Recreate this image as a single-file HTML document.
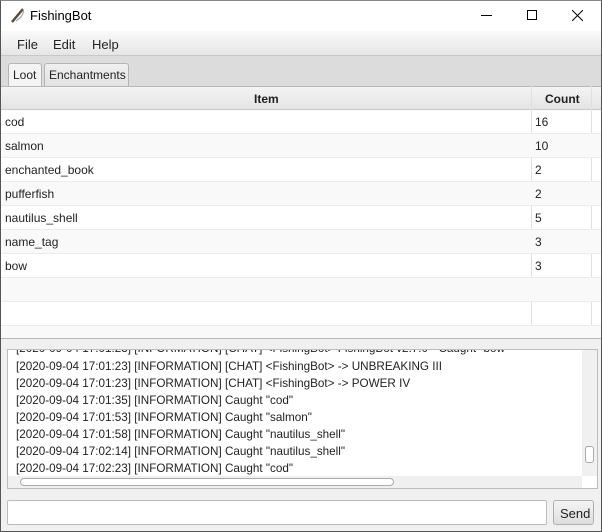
<!DOCTYPE html><html><head><style>
*{box-sizing:border-box;margin:0;padding:0}
body{width:602px;height:532px;overflow:hidden;font-family:"Liberation Sans",sans-serif;font-size:12px;color:#222;background:#f0f0f0;position:relative}
.a{position:absolute}
.win{left:0;top:0;width:602px;height:532px;border:1px solid #555;border-top:1px solid #888}
.title{left:1px;top:0;width:600px;height:31px;background:#fff}
.menu{left:1px;top:31px;width:600px;height:25px;background:linear-gradient(#fafafa,#e6e6e6);border-bottom:1px solid #c8c8c8}
.menu span{position:absolute;top:6px;font-size:13px;color:#222}
.tabs{left:1px;top:56px;width:600px;height:30px;background:#dcdcdc}
.tab{top:63px;height:23px;border:1px solid #b5b5b5;border-bottom:none;border-radius:3px 3px 0 0;font-size:12px;padding:4px 0 0 4px;background:linear-gradient(#f0f0f0,#e2e2e2);white-space:nowrap}
.hdr{left:1px;top:86px;width:600px;height:24px;background:linear-gradient(#f4f4f4,#e4e4e4);border-top:1px solid #b8b8b8;border-bottom:1px solid #c8c8c8;font-weight:bold;font-size:12px}
.row{left:1px;width:600px;height:24px;border-bottom:1px solid #ececec;font-size:12px}
.row span{position:absolute;top:5px}
.log{left:7px;top:349px;width:591px;height:140px;background:#fff;border:1px solid #bdbdbd;overflow:hidden}
.log div{position:absolute;left:8px;font-size:11.7px;white-space:nowrap;color:#222}
</style></head><body>
<div class="a title"></div>
<svg class="a" style="left:10px;top:7px" width="16" height="16" viewBox="0 0 16 16"><path d="M2 15 L13 2" stroke="#5a4a3a" stroke-width="2.5"/><path d="M13 2 Q15 8 6 14" stroke="#999" fill="none" stroke-width="1"/></svg>
<div class="a" style="left:30px;top:8px;font-size:13px;color:#000">FishingBot</div>
<div class="a" style="left:481px;top:15px;width:11px;height:1px;background:#000"></div>
<div class="a" style="left:527px;top:10px;width:10px;height:10px;border:1px solid #000"></div>
<svg class="a" style="left:572px;top:10px" width="11" height="11"><path d="M0 0L11 11M11 0L0 11" stroke="#000" stroke-width="1"/></svg>
<div class="a menu"><span style="left:16px">File</span><span style="left:52px">Edit</span><span style="left:91px">Help</span></div>
<div class="a tabs"></div>
<div class="a tab" style="left:8px;width:34px;background:#f4f4f4;height:24px">Loot</div>
<div class="a tab" style="left:44px;width:85px">Enchantments</div>
<div class="a" style="left:1px;top:86px;width:600px;height:253px;background:#fff"></div>
<div class="a hdr"><span class="a" style="left:253px;top:5px">Item</span><span class="a" style="left:544px;top:5px">Count</span></div>
<div class="a" style="left:531px;top:86px;width:1px;height:252px;background:#e0e0e0"></div>
<div class="a" style="left:591px;top:86px;width:1px;height:252px;background:#e0e0e0"></div>
<div class="a row" style="top:110px"><span style="left:4px">cod</span><span style="left:534px">16</span></div>
<div class="a row" style="top:134px;background:#f9f9f9"><span style="left:4px">salmon</span><span style="left:534px">10</span></div>
<div class="a row" style="top:158px"><span style="left:4px">enchanted_book</span><span style="left:534px">2</span></div>
<div class="a row" style="top:182px;background:#f9f9f9"><span style="left:4px">pufferfish</span><span style="left:534px">2</span></div>
<div class="a row" style="top:206px"><span style="left:4px">nautilus_shell</span><span style="left:534px">5</span></div>
<div class="a row" style="top:230px;background:#f9f9f9"><span style="left:4px">name_tag</span><span style="left:534px">3</span></div>
<div class="a row" style="top:254px"><span style="left:4px">bow</span><span style="left:534px">3</span></div>
<div class="a row" style="top:278px;background:#f9f9f9"></div>
<div class="a row" style="top:302px"></div>
<div class="a row" style="top:326px;height:12px;background:#f9f9f9;border:none"></div>
<div class="a" style="left:1px;top:338px;width:600px;height:1px;background:#b8b8b8"></div>
<div class="a log">
<div style="top:-8px">[2020-09-04 17:01:23] [INFORMATION] [CHAT] &lt;FishingBot&gt; FishingBot v2.7.0 - Caught "bow"</div>
<div style="top:10px">[2020-09-04 17:01:23] [INFORMATION] [CHAT] &lt;FishingBot&gt; -&gt; UNBREAKING III</div>
<div style="top:27px">[2020-09-04 17:01:23] [INFORMATION] [CHAT] &lt;FishingBot&gt; -&gt; POWER IV</div>
<div style="top:44px">[2020-09-04 17:01:35] [INFORMATION] Caught "cod"</div>
<div style="top:61px">[2020-09-04 17:01:53] [INFORMATION] Caught "salmon"</div>
<div style="top:78px">[2020-09-04 17:01:58] [INFORMATION] Caught "nautilus_shell"</div>
<div style="top:95px">[2020-09-04 17:02:14] [INFORMATION] Caught "nautilus_shell"</div>
<div style="top:112px">[2020-09-04 17:02:23] [INFORMATION] Caught "cod"</div>
</div>
<div class="a" style="left:582px;top:350px;width:15px;height:126px;background:#f0f0f0"></div>
<div class="a" style="left:585px;top:446px;width:9px;height:17px;background:#fff;border:1px solid #aaa;border-radius:3px"></div>
<div class="a" style="left:8px;top:476px;width:574px;height:12px;background:#f0f0f0"></div>
<div class="a" style="left:20px;top:478px;width:374px;height:8px;background:#fff;border:1px solid #aaa;border-radius:4px"></div>
<div class="a" style="left:7px;top:500px;width:540px;height:25px;background:#fff;border:1px solid #bbb;border-radius:2px"></div>
<div class="a" style="left:553px;top:500px;width:41px;height:25px;background:linear-gradient(#f4f4f4,#dedede);border:1px solid #b0b0b0;border-radius:3px;font-size:13px;padding:5px 0 0 6px">Send</div>
<div class="a win"></div>
</body></html>
